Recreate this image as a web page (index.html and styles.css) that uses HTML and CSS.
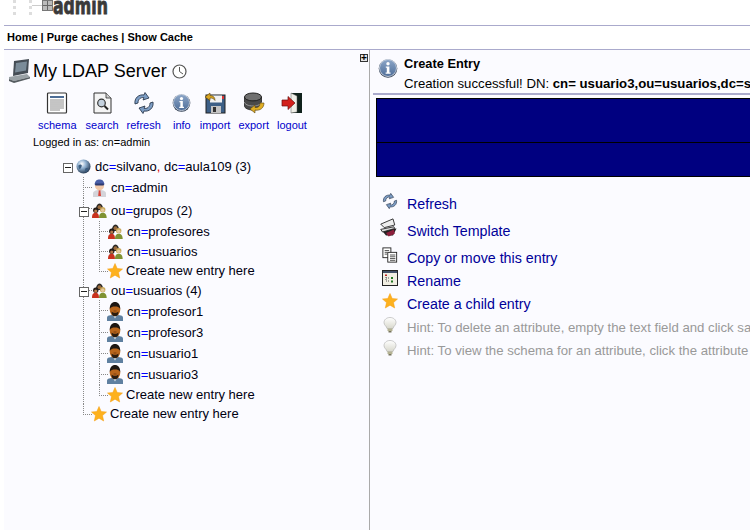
FILE: index.html
```html
<!DOCTYPE html>
<html lang="en">
<head>
  <meta charset="UTF-8" />
  <title>phpLDAPadmin</title>
  <link rel="stylesheet" href="styles.css">
</head>
<body>

<svg class="sprites" width="0" height="0">
  <defs>
    <radialGradient id="globeFill" cx="0.38" cy="0.32" r="0.75">
      <stop offset="0" stop-color="#ffffff"/><stop offset="0.4" stop-color="#8fb0d0"/><stop offset="1" stop-color="#1a2c44"/>
    </radialGradient>
    <linearGradient id="infoFill" x1="0" y1="0" x2="0" y2="1">
      <stop offset="0" stop-color="#8ca6c8"/><stop offset="1" stop-color="#4f6e99"/>
    </linearGradient>
    <linearGradient id="bulbFill" x1="0" y1="0" x2="0" y2="1">
      <stop offset="0" stop-color="#ffffff"/><stop offset="1" stop-color="#d8d8cc"/>
    </linearGradient>
  </defs>
  <symbol id="star" viewBox="0 0 16 16">
    <path d="M8 0.500l2.200 5 5.300 0.500-4 3.600 1.200 5.400L8 12.200 3.300 15l1.200-5.400-4-3.600 5.300-0.500z" fill="#fdb11e" stroke="#f59c10" stroke-width="0.500"/>
  </symbol>
  <symbol id="group" viewBox="0 0 14 14">
    <path d="M3.500 6.500c0-3 1.500-6 3.500-6s3.500 3 3.500 6z" fill="#2c2a26"/>
    <circle cx="7" cy="4" r="1.800" fill="#9a6a3c"/>
    <circle cx="10" cy="6.200" r="2.500" fill="#c9a95a"/>
    <circle cx="10" cy="6.800" r="1.600" fill="#e6c9a0"/>
    <circle cx="3.500" cy="6.800" r="2.500" fill="#231c18"/>
    <circle cx="3.500" cy="7.500" r="1.500" fill="#b77a4c"/>
    <path d="M0 14c0-3.500 1.200-4.800 3.300-4.800s3.200 1.300 3.200 4.800z" fill="#c8321e"/>
    <path d="M6.500 14c0-3.500 1.300-5 3.500-5s3.700 1.500 3.700 5z" fill="#7f9232"/>
  </symbol>
  <symbol id="person" viewBox="0 0 16 19">
    <path d="M0 19v-3.500c0-1.800 3-2.800 8-2.800s8 1 8 2.800V19z" fill="#5f80a0"/>
    <path d="M6 13h4l-2 3.500z" fill="#dfe6ec"/>
    <ellipse cx="8" cy="7.500" rx="5.300" ry="6.800" fill="#b8651b"/>
    <path d="M2.700 7C2.700 2.500 5 0 8 0s5.300 2.500 5.300 7C12 5 10.500 4.500 8 4.500S4 5 2.700 7z" fill="#1d1712"/>
    <path d="M4.500 9.500c1 1 2 1.200 3.500 1.200s2.500-0.200 3.500-1.200c0 3-1.200 4.800-3.500 4.800S4.500 12.500 4.500 9.500z" fill="#2a1c10"/>
    <path d="M6.500 8.500h3v1h-3z" fill="#7a3f10"/>
  </symbol>
  <symbol id="admin" viewBox="0 0 15 18">
    <path d="M1 18v-3.500C1 12.500 3.500 11 7.500 11s6.500 1.500 6.500 3.500V18z" fill="#d4d4da"/>
    <path d="M6.800 11h1.500l0.700 6H6.200z" fill="#d9443a"/>
    <ellipse cx="7.500" cy="6.500" rx="4.600" ry="5" fill="#f0c7a8"/>
    <path d="M2.500 5.500C3 1.800 5 0.500 7.500 0.500s4.500 1.300 5 5z" fill="#4a5fa8"/>
    <rect x="3" y="4.500" width="9" height="2" rx="1" fill="#2e3a70"/>
  </symbol>
  <symbol id="globe" viewBox="0 0 16 16">
    <circle cx="8" cy="8" r="7.500" fill="url(#globeFill)"/>
    <path d="M2.500 7c1.500-1.500 3-1.500 3.500-0.500s-0.500 3-1.500 4-2-1.500-2-3.500zM10 10c1.500-1 3-1 3 0s-1 3-2 3.500-2-2.500-1-3.500z" fill="#3c5d80"/>
  </symbol>
  <symbol id="info" viewBox="0 0 20 20">
    <circle cx="10" cy="10.500" r="9.300" fill="#2f3d52"/>
    <circle cx="10" cy="10" r="8.500" fill="url(#infoFill)" stroke="#dfe6ef" stroke-width="0.800"/>
    <circle cx="10" cy="5.800" r="1.700" fill="#fff"/>
    <path d="M7.800 8.500h3.600v6h1.200v1.300H7.600v-1.300h1.200V9.800h-1z" fill="#fff"/>
  </symbol>
  <symbol id="refresh" viewBox="0 0 22 22">
    <path d="M2 12C1 6 6 2 11 3l1-2.500 4 5.500-6 2 1-2.300C8 5 5 7 5 11z" fill="#7d9dc4" stroke="#1e2c40" stroke-width="0.800"/>
    <path d="M20 10c1 6-4 10-9 9l-1 2.500-4-5.500 6-2-1 2.300c3 .700 6-1.300 6-5.300z" fill="#7d9dc4" stroke="#1e2c40" stroke-width="0.800"/>
  </symbol>
  <symbol id="bulb" viewBox="0 0 14 16">
    <path d="M7 0.500C3.500 0.500 1 2.800 1 5.500c0 2.800 2.500 3.500 3 6h6c0.500-2.500 3-3.200 3-6 0-2.700-2.500-5-6-5z" fill="url(#bulbFill)" stroke="#b5b5b5" stroke-width="0.700"/>
    <rect x="4.500" y="11.500" width="5" height="2.500" fill="#b5b394"/>
    <rect x="5.500" y="14" width="3" height="1.500" fill="#77745c"/>
  </symbol>
</svg>

<div class="logo">
  <span class="logo-rail"></span>
  <span class="logo-stem"></span>
  <span class="logo-box"></span>
  <span class="logo-text">admin</span>
</div>

<div class="nav"><a>Home</a> | <a>Purge caches</a> | <a>Show Cache</a></div>

<div class="panes">
  <div class="left-pane">
    <span class="pane-toggle">+</span>
    <div class="server-head">
      <svg class="server-icon" viewBox="0 0 23 24">
        <path d="M6 2l15-2-1 14-15 3z" fill="#454d55"/>
        <path d="M8 4l11-1.500-1 9-11 2z" fill="#7b8c99"/>
        <path d="M1 18l18-3 3 3-16 4-5-2z" fill="#9aa2a6"/>
        <path d="M1 20l5 2 16-4v1.500L6 24l-5-2z" fill="#555c60"/>
      </svg>
      <span class="server-name">My LDAP Server</span>
      <svg class="clock" viewBox="0 0 15 15">
        <circle cx="7.500" cy="7.500" r="6.500" fill="#fff" stroke="#555" stroke-width="1.200"/>
        <path d="M7.500 3v4.500l3.500 2.500" fill="none" stroke="#555" stroke-width="1"/>
      </svg>
    </div>

    <div class="toolbar">
      <a class="tool">
        <svg viewBox="0 0 22 22"><rect x="1.500" y="1" width="19" height="20" rx="1" fill="#fff" stroke="#333" stroke-width="1.200"/><path d="M4 4h14v2H4z" fill="#4d6d96"/><path d="M4 8h14M4 10h14M4 12h14M4 14h14M4 16h14M4 18h10" stroke="#8a8a8a" stroke-width="1"/></svg>
        schema
      </a>
      <a class="tool tool-search">
        <svg viewBox="0 0 22 22"><path d="M3 1h12l5 5v15H3z" fill="#f4f4f4" stroke="#333" stroke-width="1"/><path d="M15 1v5h5" fill="#ccc" stroke="#333" stroke-width="0.800"/><circle cx="10.500" cy="11" r="3.800" fill="#c5d2df" stroke="#333" stroke-width="1.200"/><path d="M13.500 14l3.500 3.500" stroke="#222" stroke-width="2"/></svg>
        search
      </a>
      <a class="tool"><svg viewBox="0 0 22 22"><use href="#refresh"/></svg>refresh</a>
      <a class="tool tool-wide"><svg viewBox="0 0 20 20"><use href="#info"/></svg>info</a>
      <a class="tool">
        <svg viewBox="0 0 22 22"><rect x="2" y="3" width="19" height="18" fill="#3d5f86" stroke="#222"/><rect x="6" y="3.500" width="12" height="7" fill="#f2f2f2"/><rect x="7" y="14" width="10" height="7" fill="#c4c4c4"/><rect x="9" y="15" width="3" height="5" fill="#333"/><rect x="18" y="4" width="2" height="3" fill="#d33"/><path d="M1 5l5-4v2.500c3 0 5 1.500 5 5-1-2-3-2.500-5-2.500V8.500z" fill="#d9a521" stroke="#5a430d" stroke-width="0.600"/></svg>
        import
      </a>
      <a class="tool">
        <svg viewBox="0 0 22 22"><ellipse cx="10" cy="5" rx="8.500" ry="4" fill="#6f6f6f" stroke="#222"/><path d="M1.500 5v9c0 2.200 3.800 4 8.500 4s8.500-1.800 8.500-4V5c0 2.200-3.800 4-8.500 4S1.500 7.200 1.500 5z" fill="#4a4a4a" stroke="#222" stroke-width="0.800"/><path d="M1.500 10c0 2.200 3.800 4 8.500 4s8.500-1.800 8.500-4" fill="none" stroke="#999"/><path d="M21 11c0 5-4 8-9 7v3l-5-4 5-4v2.500c3 .500 5-1 5-4.500z" fill="#e0ae25" stroke="#5a430d" stroke-width="0.600"/></svg>
        export
      </a>
      <a class="tool">
        <svg viewBox="0 0 22 22"><rect x="10" y="1" width="11" height="20" fill="#10221c"/><path d="M10 1l6 3v16l-6 1z" fill="#efefe8" stroke="#555" stroke-width="0.500"/><path d="M1 8h6V4.500l7 6.500-7 6.500V14H1z" fill="#d3201c" stroke="#6a0f0c" stroke-width="0.700"/></svg>
        logout
      </a>
    </div>

    <div class="logged-in">Logged in as: cn=admin</div>

    <div class="tree">
      <div class="tree-root">
        <span class="expander"></span>
        <svg class="icon globe"><use href="#globe"/></svg>
        <span>dc<b>=</b>silvano<i>,</i> dc<b>=</b>aula109 (3)</span>
      </div>
      <ul class="branch">
        <li class="row-admin">
          <div class="node"><svg class="icon"><use href="#admin"/></svg><span>cn<b>=</b>admin</span></div>
        </li>
        <li>
          <div class="node row-ou-first"><span class="expander"></span><svg class="icon"><use href="#group"/></svg><span>ou<b>=</b>grupos (2)</span></div>
          <ul class="branch">
            <li><div class="node"><svg class="icon"><use href="#group"/></svg><span>cn<b>=</b>profesores</span></div></li>
            <li><div class="node"><svg class="icon"><use href="#group"/></svg><span>cn<b>=</b>usuarios</span></div></li>
            <li><div class="node node-star"><svg class="icon"><use href="#star"/></svg><span>Create new entry here</span></div></li>
          </ul>
        </li>
        <li>
          <div class="node"><span class="expander"></span><svg class="icon"><use href="#group"/></svg><span>ou<b>=</b>usuarios (4)</span></div>
          <ul class="branch">
            <li><div class="node node-person first-person"><svg class="icon"><use href="#person"/></svg><span>cn<b>=</b>profesor1</span></div></li>
            <li><div class="node node-person"><svg class="icon"><use href="#person"/></svg><span>cn<b>=</b>profesor3</span></div></li>
            <li><div class="node node-person"><svg class="icon"><use href="#person"/></svg><span>cn<b>=</b>usuario1</span></div></li>
            <li><div class="node node-person"><svg class="icon"><use href="#person"/></svg><span>cn<b>=</b>usuario3</span></div></li>
            <li><div class="node node-star"><svg class="icon"><use href="#star"/></svg><span>Create new entry here</span></div></li>
          </ul>
        </li>
        <li><div class="node node-star"><svg class="icon"><use href="#star"/></svg><span>Create new entry here</span></div></li>
      </ul>
    </div>
  </div>

  <div class="right-pane">
    <div class="notice">
      <svg class="notice-icon" viewBox="0 0 20 20"><use href="#info"/></svg>
      <div class="notice-text">
        <div class="notice-title">Create Entry</div>
        <div class="notice-body">Creation successful! DN: <strong>cn= usuario3,ou=usuarios,dc=silvano,dc=aula109</strong></div>
      </div>
    </div>
    <div class="entry-block">
      <div class="block-top"></div>
      <div class="block-bottom"></div>
    </div>
    <ul class="actions">
      <li class="act-refresh"><svg viewBox="0 0 22 22"><use href="#refresh"/></svg><a>Refresh</a></li>
      <li class="act-switch">
        <svg viewBox="0 0 24 24"><path d="M3 14l17-2-4 8H8z" fill="#222"/><path d="M2 7l14-6 2 7-12 3z" fill="#eee" stroke="#222"/><path d="M2 13l15-3 1 2-14 4z" fill="#ddd" stroke="#222"/><path d="M8 17l9-4 1 5-7 3z" fill="#8c1f3c"/></svg>
        <a>Switch Template</a>
      </li>
      <li class="act-copy">
        <svg viewBox="0 0 18 18"><rect x="1" y="1" width="9" height="11" fill="#fff" stroke="#222"/><rect x="6.500" y="6" width="10" height="11" fill="#fff" stroke="#222"/><path d="M3 4h5M3 6h3M3 8h3M9 9h6M9 11h6M9 13h6M9 15h6" stroke="#444"/></svg>
        <a>Copy or move this entry</a>
      </li>
      <li class="act-rename">
        <svg viewBox="0 0 16 16"><rect x="0.500" y="0.500" width="15" height="15" fill="#f1eee2" stroke="#222"/><path d="M1 1h14v2H1z" fill="#44516a"/><path d="M4 5v6h4M4 8h4" fill="none" stroke="#555" stroke-dasharray="1 1"/><rect x="3" y="4.500" width="2" height="1.500" fill="#b22"/><rect x="9" y="7" width="2" height="2" fill="#272"/><rect x="9" y="10.500" width="2" height="2" fill="#272"/></svg>
        <a>Rename</a>
      </li>
      <li class="act-child"><svg viewBox="0 0 16 16"><use href="#star"/></svg><a>Create a child entry</a></li>
      <li class="hint"><svg viewBox="0 0 14 16"><use href="#bulb"/></svg><span>Hint: To delete an attribute, empty the text field and click save.</span></li>
      <li class="hint"><svg viewBox="0 0 14 16"><use href="#bulb"/></svg><span>Hint: To view the schema for an attribute, click the attribute name.</span></li>
    </ul>
  </div>
</div>

</body>
</html>
```
FILE: styles.css
```css
html, body {
  margin: 0;
  height: 530px;
  overflow: hidden;
}
body {
  font-family: "Liberation Sans", Arial, sans-serif;
  font-size: 13px;
  color: #000;
  background: #fff;
}
.sprites {
  position: absolute;
}

/* top logo, cut off by the frame */
.logo {
  height: 25px;
  display: flex;
  align-items: flex-start;
  overflow: hidden;
}
.logo-rail {
  width: 1px;
  height: 15px;
  margin-left: 13px;
  border-left: 3px dotted #ddd;
}
.logo-stem {
  width: 10px;
  height: 15px;
  margin-left: 12px;
  border-left: 3px dotted #ddd;
  background: linear-gradient(#ccc, #ccc) 0 5px / 10px 1px no-repeat;
}
.logo-box {
  box-sizing: border-box;
  width: 11px;
  height: 11px;
  border: 1px solid #777;
  background: linear-gradient(#666, #666) 0 4px / 9px 1px no-repeat, linear-gradient(#666, #666) 4px 0 / 1px 9px no-repeat, #bbb;
}
.logo-text {
  margin: -8px 0 0 0;
  font-family: "DejaVu Sans", sans-serif;
  font-size: 23px;
  font-weight: bold;
  font-stretch: condensed;
  line-height: 28px;
  color: #3a3a3a;
  -webkit-text-stroke: 0.8px #3a3a3a;
  transform: scaleX(0.76);
  transform-origin: left top;
}

.nav {
  height: 23px;
  margin-left: 4px;
  padding-left: 3px;
  border-top: 1px solid #aaaacc;
  border-bottom: 1px solid #aaaacc;
  font-size: 11px;
  font-weight: bold;
  line-height: 23px;
}

.panes {
  display: flex;
  height: 480px;
  margin-left: 4px;
  background: #fbfbff;
}
.left-pane {
  position: relative;
  box-sizing: border-box;
  width: 366px;
  border-right: 1px solid #aaaaaa;
}
.pane-toggle {
  position: absolute;
  top: 4px;
  right: 1px;
  width: 6px;
  height: 6px;
  border: 1px solid #333;
  background: #e4e4e4;
  font-size: 10px;
  font-weight: bold;
  line-height: 6px;
  text-align: center;
}

.server-head {
  display: flex;
  align-items: center;
  height: 24px;
  padding: 9px 0 0 4px;
}
.server-icon {
  width: 23px;
  height: 24px;
}
.server-name {
  margin-left: -2px;
  padding-left: 4px;
  font-size: 18px;
}
.clock {
  width: 15px;
  height: 15px;
  margin-left: 5px;
}

.toolbar {
  display: flex;
  margin: 9px 0 0 30px;
}
.tool {
  display: flex;
  flex-direction: column;
  align-items: center;
  padding: 0 4px;
  font-size: 11px;
  line-height: 13px;
  color: #0000cc;
}
.tool svg {
  width: 22px;
  height: 22px;
  margin-bottom: 5px;
}
.tool-search {
  margin-left: 1px;
}
.tool-wide {
  width: 22px;
  padding: 0 3px 0 6px;
}
.tool-wide svg {
  width: 19px;
  height: 19px;
  margin: 1px 0 7px;
}
.logged-in {
  margin: 4px 0 0 29px;
  font-size: 11px;
  line-height: 13px;
}

/* entry tree */
.tree {
  margin: 7px 0 0 59px;
}
.tree-root {
  display: flex;
  align-items: center;
  height: 21px;
}
.tree-root .expander {
  margin: 2px 3px 0 0;
}
.tree b {
  font-weight: normal;
  color: #0000ff;
}
.tree i {
  font-style: normal;
  color: #e00000;
}
.tree span {
  color: #001;
}
.branch {
  list-style: none;
  margin: 0;
  padding: 0;
}
.tree > .branch {
  margin-left: 20px;
}
.branch .branch {
  margin-left: 16px;
}
.branch li {
  position: relative;
}
.branch li::before {
  content: "";
  position: absolute;
  left: 0;
  top: 0;
  width: 8px;
  height: 10px;
  border-left: 1px dotted #888;
  border-bottom: 1px dotted #888;
}
.branch li:not(:last-child)::after {
  content: "";
  position: absolute;
  left: 0;
  top: 10px;
  bottom: 0;
  border-left: 1px dotted #888;
}
.node {
  display: flex;
  align-items: center;
  height: 20px;
  padding-left: 9px;
  position: relative;
  z-index: 1;
}
.row-admin .node {
  height: 21px;
}
.row-ou-first {
  box-sizing: border-box;
  height: 23px;
  padding-top: 2px;
}
.node-star {
  height: 19px;
  margin-left: -1px;
}
.node-person {
  height: 21px;
}
.first-person {
  height: 22px;
}
.icon {
  flex: none;
  width: 15px;
  height: 15px;
  margin-right: 4px;
}
.node-person .icon {
  width: 16px;
  height: 19px;
  margin: 0 4px 0 -1px;
}
.row-admin .icon {
  height: 18px;
}
.node-star .icon {
  width: 16px;
  height: 16px;
  margin-right: 3px;
}
.node > .expander {
  position: absolute;
  left: -4px;
  top: 50%;
  margin-top: -3px;
}
.expander {
  display: block;
  flex: none;
  box-sizing: border-box;
  width: 10px;
  height: 10px;
  border: 1px solid #666;
  background: linear-gradient(#222, #222) 1px 3px / 6px 1px no-repeat, #fff;
}

/* right side */
.right-pane {
  flex: 1;
  min-width: 0;
  overflow: hidden;
}
.notice {
  display: flex;
  box-sizing: border-box;
  height: 45px;
  margin-left: 3px;
  padding: 8px 0 0 5px;
  border-bottom: 2px solid #aaaacc;
}
.notice-icon {
  flex: none;
  width: 20px;
  height: 20px;
  margin-right: 6px;
}
.notice-text {
  margin-top: -1px;
  white-space: nowrap;
}
.notice-title {
  font-size: 12.8px;
  font-weight: bold;
  line-height: 13px;
}
.notice-body {
  margin-top: 7px;
  font-size: 13.2px;
  line-height: 13px;
}
.entry-block {
  margin: 3px 0 0 6px;
  border-left: 1px solid #000;
  border-top: 1px solid #000;
  border-bottom: 1px solid #000;
  background: #000080;
}
.block-top {
  height: 43px;
  border-bottom: 1px solid #000;
}
.block-bottom {
  height: 33px;
}
.actions {
  list-style: none;
  margin: 0;
  padding: 15px 0 0 12px;
  font-size: 14.25px;
  white-space: nowrap;
}
.actions li {
  display: flex;
  align-items: center;
  height: 23px;
}
.actions svg {
  flex: none;
  width: 16px;
  height: 16px;
  margin: 0 9px 5px 0;
}
.actions a {
  color: #000099;
}
.act-refresh, .act-switch {
  margin-bottom: 4px;
}
.act-child {
  margin-bottom: 1px;
}
.act-switch svg {
  width: 21px;
  height: 21px;
  margin: 0 7px 4px -3px;
}
.hint {
  font-size: 13.2px;
  color: #999;
}
```
